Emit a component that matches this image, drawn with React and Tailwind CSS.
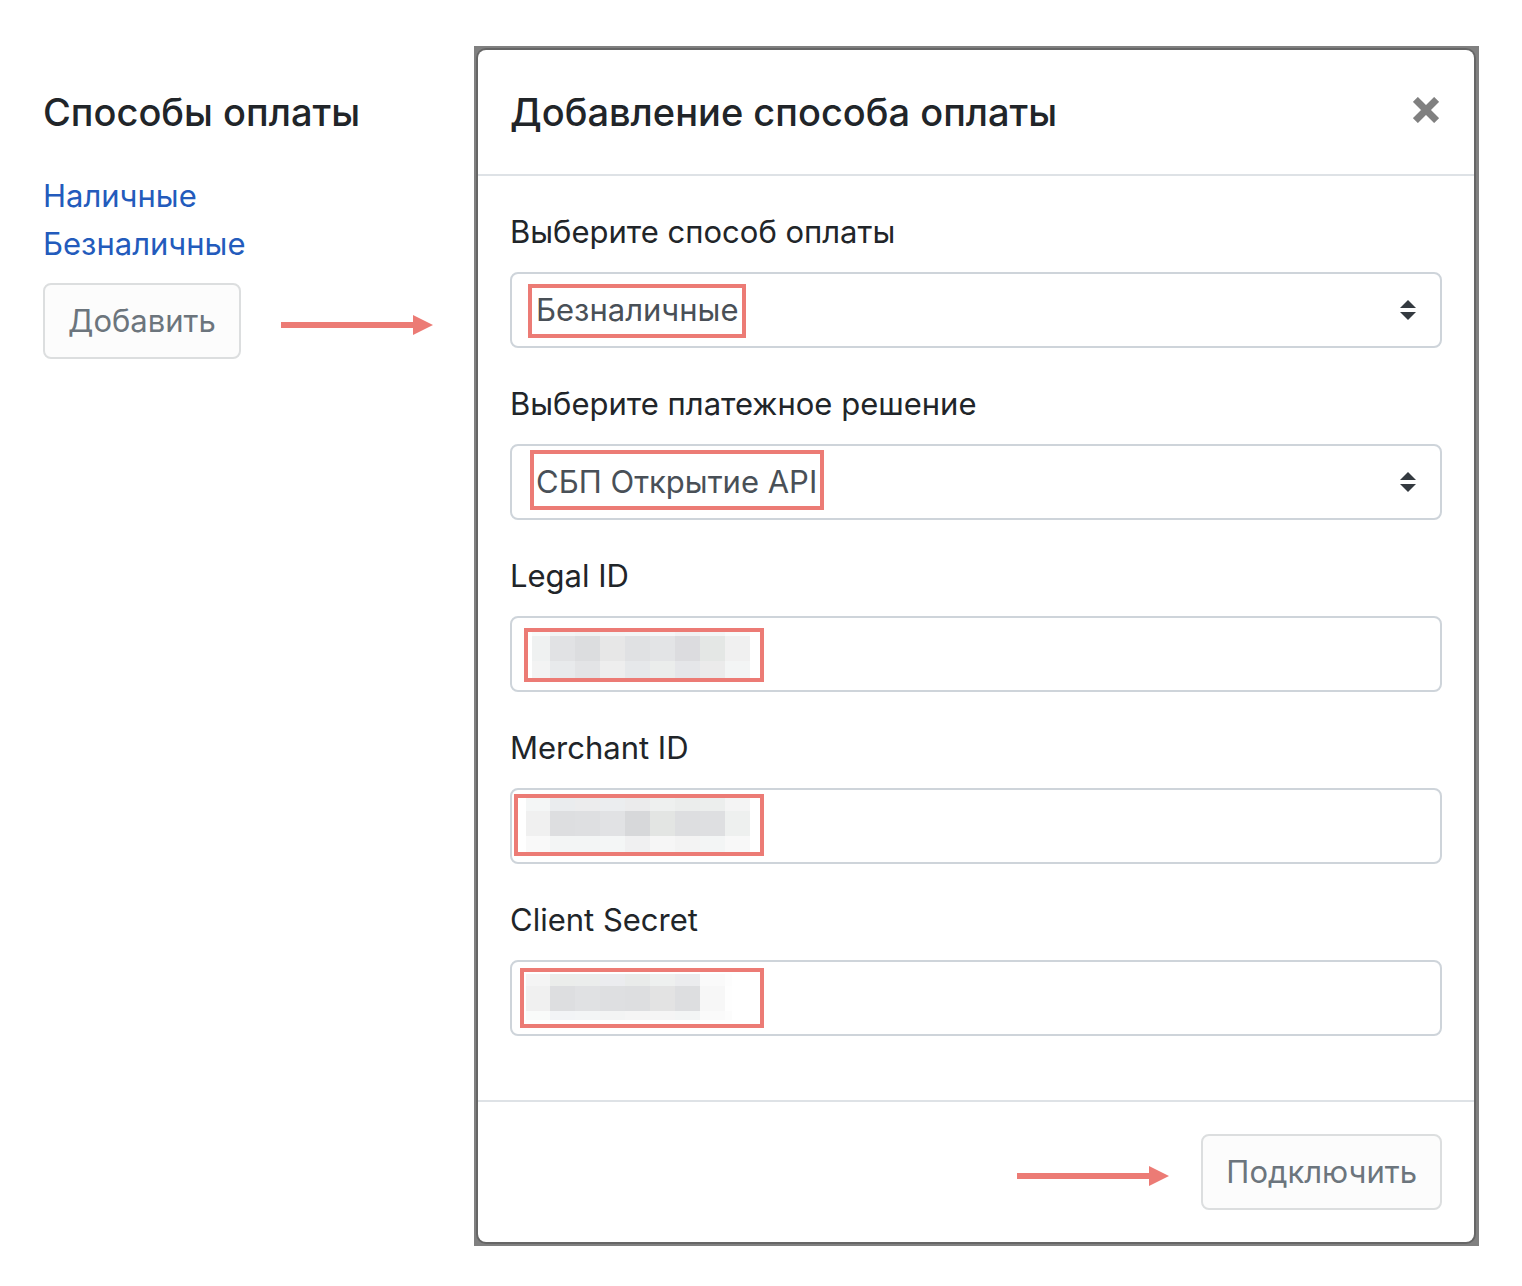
import React, { useState } from "react";

const METHODS = ["Безналичные", "Наличные"];
const SOLUTIONS = ["СБП Открытие API"];

const LEGAL_MASK = {
  xs: [4, 22, 47, 72, 97, 122, 147, 172, 197, 222],
  ys: [0, 4, 29, 46],
  colors: [
    ["#f8faf9", "#f3f4f4", "#f1f2f2", "#f4f4f4", "#f4f5f5", "#f6f6f7", "#f2f2f3", "#f4f5f5", "#f8faf9"],
    ["#eff1f1", "#e1e2e4", "#dcdddf", "#e7e7e7", "#e0e1e3", "#e3e4e6", "#dcdcdf", "#e4e7e5", "#f0f0f0"],
    ["#f3f3f3", "#e8eaec", "#e3e4e6", "#eeeeee", "#e6e8ea", "#ebedec", "#e5e6e9", "#ebebeb", "#f3f5f5"],
  ],
};

const MERCHANT_MASK = {
  xs: [8, 32, 57, 82, 107, 132, 157, 182, 207, 232],
  ys: [0, 13, 38, 54],
  colors: [
    ["#f4f6f6", "#eaecee", "#ececed", "#ebedef", "#ebebec", "#eef0ef", "#ebedec", "#eceeed", "#f4f4f4"],
    ["#f0f0f0", "#dddee0", "#dedfe1", "#e1e2e4", "#d7d8da", "#e3e5e3", "#dddee0", "#dedfe1", "#eef0ef"],
    ["#f9f9f9", "#f3f5f5", "#f3f5f5", "#f4f6f6", "#f0f0f1", "#f6f6f6", "#f3f3f3", "#f3f5f5", "#f8f8f8"],
  ],
};

const SECRET_MASK = {
  xs: [2, 26, 51, 76, 101, 126, 151, 176, 201, 208],
  ys: [2, 14, 39, 48],
  colors: [
    ["#f4f4f4", "#ebedeb", "#ebedec", "#ebecef", "#e9ebea", "#eef0ef", "#ebecee", "#fafafa", "#fdfdfd"],
    ["#f0f0f0", "#dddee0", "#e0e1e3", "#dedfe1", "#dddee0", "#e3e3e3", "#dddee0", "#f7f7f7", "#fefefe"],
    ["#f9fbfa", "#f2f4f6", "#f3f5f6", "#f3f4f4", "#f5f5f5", "#f5f5f5", "#f3f5f5", "#fafafa", "#fcfcfc"],
  ],
};

const Mosaic = ({ mask }) => (
  <svg className="block h-full w-full" shapeRendering="crispEdges" aria-hidden="true">
    {mask.colors.map((row, r) =>
      row.map((color, c) => (
        <rect
          key={`${r}-${c}`}
          x={mask.xs[c]}
          y={mask.ys[r]}
          width={mask.xs[c + 1] - mask.xs[c]}
          height={mask.ys[r + 1] - mask.ys[r]}
          fill={color}
        />
      ))
    )}
  </svg>
);

// Red frame drawn over a field
const Highlight = ({ className, children }) => (
  <div className={`pointer-events-none absolute border-4 border-[#ec7b75] ${className}`}>{children}</div>
);

const Arrow = () => (
  <svg width="152" height="20" viewBox="0 0 152 20" className="mt-2 shrink-0" aria-hidden="true">
    <path d="M0 7H132V0L152 10L132 20V13H0Z" fill="#ec7b75" />
  </svg>
);

const Field = ({ id, label, children }) => (
  <div className="mb-8">
    <label htmlFor={id} className="mb-4 block">
      {label}
    </label>
    <div className="relative">{children}</div>
  </div>
);

const controlClass =
  "block h-[76px] w-full appearance-none rounded-lg border-2 border-[#ced4da] bg-white px-6 text-[#495057] outline-none";

const Select = ({ id, options }) => {
  const [value, setValue] = useState(options[0]);

  return (
    <>
      <select id={id} value={value} onChange={(e) => setValue(e.target.value)} className={controlClass}>
        {options.map((option) => (
          <option key={option}>{option}</option>
        ))}
      </select>
      <svg
        width="16"
        height="20"
        viewBox="0 0 16 20"
        className="pointer-events-none absolute top-7 right-[26px]"
        aria-hidden="true"
      >
        <path d="M8 0L16 8H0ZM8 20L0 12H16Z" fill="#343a40" />
      </svg>
    </>
  );
};

const titleClass = "text-[38px] leading-[60px] font-medium";

const buttonClass =
  "h-[76px] rounded-lg border-2 border-[#dcdedf] bg-[#fcfcfc] px-[23px] text-[#6c757d] whitespace-nowrap";

export default function App() {
  return (
    <div className="flex items-start bg-white px-[43px] pt-[46px] pb-10 font-['Inter','Liberation_Sans',sans-serif] text-[31px] leading-[48px] text-[#212529]">
      <section className="w-[431px] shrink-0 pt-9">
        <h2 className={titleClass}>Способы оплаты</h2>
        <nav className="mt-[30px] flex flex-col items-start text-[#235bbc]">
          <a href="#cash">Наличные</a>
          <a href="#cashless">Безналичные</a>
        </nav>
        <div className="mt-[15px] flex items-center gap-10">
          <button type="button" className={buttonClass}>
            Добавить
          </button>
          <Arrow />
        </div>
      </section>

      <div className="min-w-0 flex-1 bg-[#808080] py-1 pr-[5px] pl-1">
        <div
          role="dialog"
          aria-labelledby="dialog-title"
          className="rounded-lg bg-white shadow-[0_0_0_2px_#666666]"
        >
          <header className="flex items-start justify-between border-b-2 border-[#dee2e6] p-8">
            <h2 id="dialog-title" className={titleClass}>
              Добавление способа оплаты
            </h2>
            <button type="button" aria-label="Закрыть" className="flex h-14 w-8 items-center justify-center">
              <svg width="26" height="26" viewBox="0 0 26 26" aria-hidden="true">
                <path d="M2.4 2.4L23.6 23.6M23.6 2.4L2.4 23.6" stroke="#808080" strokeWidth="7" />
              </svg>
            </button>
          </header>

          <form className="p-8">
            <Field id="method" label="Выберите способ оплаты">
              <Select id="method" options={METHODS} />
              <Highlight className="top-3 left-[18px] h-[54px] w-[218px]" />
            </Field>
            <Field id="solution" label="Выберите платежное решение">
              <Select id="solution" options={SOLUTIONS} />
              <Highlight className="top-[6px] left-5 h-[60px] w-[294px]" />
            </Field>
            <Field id="legal-id" label="Legal ID">
              <input id="legal-id" type="text" className={controlClass} />
              <Highlight className="top-3 left-[14px] h-[54px] w-[240px]">
                <Mosaic mask={LEGAL_MASK} />
              </Highlight>
            </Field>
            <Field id="merchant-id" label="Merchant ID">
              <input id="merchant-id" type="text" className={controlClass} />
              <Highlight className="top-[6px] left-1 h-[62px] w-[250px]">
                <Mosaic mask={MERCHANT_MASK} />
              </Highlight>
            </Field>
            <Field id="client-secret" label="Client Secret">
              <input id="client-secret" type="text" className={controlClass} />
              <Highlight className="top-2 left-[10px] h-[60px] w-[244px]">
                <Mosaic mask={SECRET_MASK} />
              </Highlight>
            </Field>
          </form>

          <footer className="flex items-center justify-end gap-8 border-t-2 border-[#dee2e6] p-8">
            <Arrow />
            <button type="button" className={buttonClass}>
              Подключить
            </button>
          </footer>
        </div>
      </div>
    </div>
  );
}
